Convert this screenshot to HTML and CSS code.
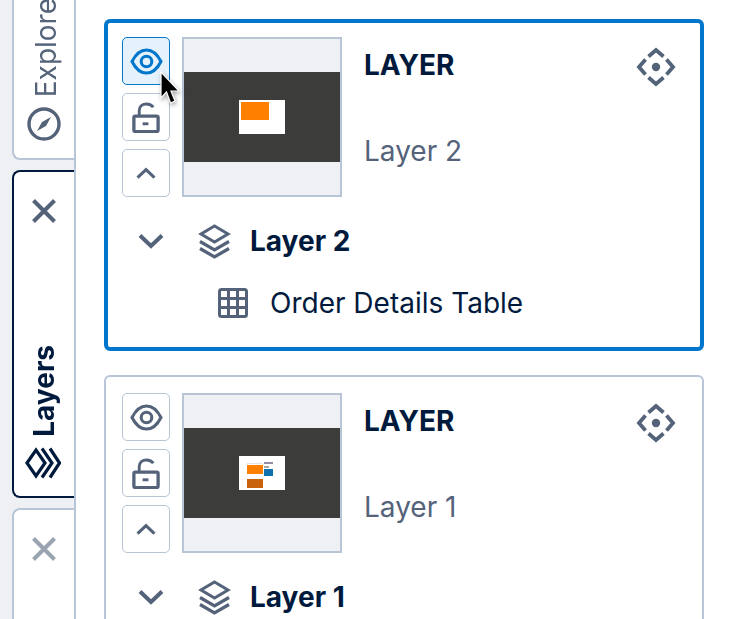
FILE: index.html
```html
<!DOCTYPE html>
<html lang="en">
<head>
    <meta charset="UTF-8">
    <title>Layers</title>
    <link rel="stylesheet" href="styles.css">
</head>
<body>
    <svg class="sprite" width="0" height="0">
        <symbol id="eye" viewBox="0 0 34 28">
            <path d="M2 14C6 6 11 2 17 2s11 4 15 12c-4 8-9 12-15 12S6 22 2 14Z" fill="none" stroke="currentColor" stroke-width="3.200"/>
            <circle cx="17" cy="14" r="5.500" fill="none" stroke="currentColor" stroke-width="3.200"/>
        </symbol>
        <symbol id="lock" viewBox="0 0 28 32">
            <path d="M7 14V9C7 4.500 10.500 2 14.500 2c3 0 5.500 1.200 7 3.500" fill="none" stroke="currentColor" stroke-width="3"/>
            <rect x="1.500" y="14.500" width="25" height="16" rx="1.500" fill="none" stroke="currentColor" stroke-width="3.400"/>
            <rect x="10.500" y="21" width="6" height="3" fill="currentColor"/>
        </symbol>
        <symbol id="chevron" viewBox="0 0 26 16">
            <path d="M2 2.500 13 13 24 2.500" fill="none" stroke="currentColor" stroke-width="4"/>
        </symbol>
        <symbol id="move" viewBox="0 0 40 40">
            <path d="M12.500 9.500 20 3l7.500 6.500M30.500 12.500 37 20l-6.500 7.500M12.500 30.500 20 37l7.500-6.500M9.500 12.500 3 20l6.500 7.500" fill="none" stroke="currentColor" stroke-width="3.800"/>
            <circle cx="20" cy="20" r="4.200" fill="currentColor"/>
        </symbol>
        <symbol id="stack" viewBox="0 0 33 35">
            <path d="M16.500 2 30 10 16.500 18 3 10Z" fill="none" stroke="currentColor" stroke-width="3"/>
            <path d="M2 17.500 16.500 26 31 17.500M2 24.500 16.500 33 31 24.500" fill="none" stroke="currentColor" stroke-width="3.200"/>
        </symbol>
        <symbol id="cross" viewBox="0 0 26 26">
            <path d="M2.500 2.500l21 21M23.500 2.500l-21 21" fill="none" stroke="currentColor" stroke-width="4"/>
        </symbol>
    </svg>

    <div class="app">
        <nav class="sidebar">
            <div class="tab tab-explore">
                <div class="tab-label">
                    <svg class="tab-icon" width="34" height="34" viewBox="0 0 34 34">
                        <circle cx="17" cy="17" r="15" fill="none" stroke="currentColor" stroke-width="3.400"/>
                        <path d="M24 10 19 19 10 24 15 15Z" fill="currentColor"/>
                    </svg>
                    <span class="tab-text">Explore</span>
                </div>
            </div>
            <div class="tab tab-active">
                <svg class="tab-close" width="26" height="26"><use href="#cross"/></svg>
                <div class="tab-label">
                    <svg class="tab-icon tab-logo" width="36" height="32" viewBox="0 0 36 32">
                        <path d="M2 16 11 3 20 16 11 29Z" fill="none" stroke="currentColor" stroke-width="3.200"/>
                        <path d="M17 1.500 27 16 17 30.500M25 1.500 34.500 16 25 30.500" fill="none" stroke="currentColor" stroke-width="3.200"/>
                    </svg>
                    <span class="tab-text">Layers</span>
                </div>
            </div>
            <div class="tab tab-muted">
                <svg class="tab-close" width="26" height="26"><use href="#cross"/></svg>
            </div>
        </nav>

        <main class="panel">
            <section class="card card-selected">
                <div class="card-top">
                    <div class="actions">
                        <button class="btn btn-on"><svg width="33" height="27"><use href="#eye"/></svg></button>
                        <button class="btn"><svg width="28" height="31"><use href="#lock"/></svg></button>
                        <button class="btn"><svg class="flip" width="20" height="13"><use href="#chevron"/></svg></button>
                    </div>
                    <div class="thumb">
                        <div class="thumb-band">
                            <div class="mini">
                                <div class="mini-orange"></div>
                            </div>
                        </div>
                    </div>
                    <div class="info">
                        <div class="info-title">LAYER</div>
                        <div class="info-name">Layer 2</div>
                    </div>
                    <svg class="move" width="40" height="40"><use href="#move"/></svg>
                </div>
                <div class="tree-row">
                    <svg class="tree-toggle" width="26" height="16"><use href="#chevron"/></svg>
                    <svg class="tree-icon" width="33" height="35"><use href="#stack"/></svg>
                    <span class="tree-name">Layer 2</span>
                </div>
                <div class="tree-child">
                    <svg class="child-icon" width="30" height="30" viewBox="0 0 30 30">
                        <rect x="1.500" y="1.500" width="27" height="27" rx="2" fill="none" stroke="currentColor" stroke-width="3"/>
                        <path d="M10.500 2v26M19.500 2v26M2 10.500h26M2 19.500h26" fill="none" stroke="currentColor" stroke-width="3"/>
                    </svg>
                    <span class="child-name">Order Details Table</span>
                </div>
            </section>

            <section class="card">
                <div class="card-top">
                    <div class="actions">
                        <button class="btn"><svg width="33" height="27"><use href="#eye"/></svg></button>
                        <button class="btn"><svg width="28" height="31"><use href="#lock"/></svg></button>
                        <button class="btn"><svg class="flip" width="20" height="13"><use href="#chevron"/></svg></button>
                    </div>
                    <div class="thumb">
                        <div class="thumb-band">
                            <div class="mini mini-split">
                                <div class="mini-col">
                                    <div class="bar-line"></div>
                                    <div class="bar-orange"></div>
                                    <div class="bar-brown"></div>
                                </div>
                                <div class="mini-col mini-col-side">
                                    <div class="bar-purple"></div>
                                    <div class="bar-grey"></div>
                                    <div class="bar-blue"></div>
                                </div>
                            </div>
                        </div>
                    </div>
                    <div class="info">
                        <div class="info-title">LAYER</div>
                        <div class="info-name">Layer 1</div>
                    </div>
                    <svg class="move" width="40" height="40"><use href="#move"/></svg>
                </div>
                <div class="tree-row">
                    <svg class="tree-toggle" width="26" height="16"><use href="#chevron"/></svg>
                    <svg class="tree-icon" width="33" height="35"><use href="#stack"/></svg>
                    <span class="tree-name">Layer 1</span>
                </div>
            </section>
        </main>
    </div>

    <svg class="cursor" width="24" height="36" viewBox="0 0 24 36">
        <path d="M2 1v26l5.500-6L11.500 32l4.500-2-4-10h8Z" fill="#000" stroke="#fff" stroke-width="1.200"/>
    </svg>
</body>
</html>
```

FILE: styles.css
```css
* { box-sizing: border-box; }
html, body { margin: 0; height: 100%; overflow: hidden; }
body { font-family: Inter, "Liberation Sans", sans-serif; color: #001a3d; background: #fff; }
.sprite { display: block; height: 0; }

.app { display: flex; height: 619px; overflow: hidden; }

.sidebar { width: 76px; flex-shrink: 0; height: 619px; padding-left: 12px; display: flex; flex-direction: column; gap: 10px; background: #eef0f4; border-right: 2px solid #b8c5d6; overflow: hidden; }
.tab { display: flex; flex-direction: column; align-items: center; flex-shrink: 0; background: #fff; border: 2px solid #b8c5d6; border-right: none; overflow: hidden; }
.tab-explore { height: 160px; border-top: none; border-radius: 0 0 0 8px; justify-content: flex-end; padding-bottom: 17px; color: #54637a; }
.tab-explore .tab-text { margin-left: 3px; }
.tab-active { height: 328px; margin-right: -2px; border-color: #001a3d; border-radius: 8px 0 0 8px; justify-content: space-between; padding: 26px 2px 17px 0; color: #001a3d; }
.tab-muted { height: 130px; border-radius: 8px 0 0 0; padding-top: 26px; color: #9aa3b0; }
.tab-active .tab-close { color: #54637a; }
.tab-label { display: flex; flex-direction: column-reverse; align-items: center; gap: 10px; }
.tab-icon { display: block; flex-shrink: 0; }
.tab-logo { margin-right: 3px; }
.tab-text { writing-mode: vertical-rl; transform: rotate(180deg); font-size: 28px; line-height: 30px; white-space: nowrap; }
.tab-active .tab-text { font-weight: 700; }

.panel { flex: 1; padding: 19px 26px 0 28px; display: flex; flex-direction: column; gap: 24px; }
.card { flex-shrink: 0; border: 2px solid #b8c5d6; border-radius: 6px; padding: 16px; background: #fff; }
.card-selected { height: 332px; border: 4px solid #0077cc; padding: 14px; }

.card-top { display: flex; align-items: flex-start; }
.actions { display: flex; flex-direction: column; gap: 8px; width: 48px; margin-right: 12px; }
.btn { width: 48px; height: 48px; padding: 0; display: flex; align-items: center; justify-content: center; background: #fff; color: #54637a; border: 1px solid #b8c5d6; border-radius: 5px; }
.btn-on { background: #e6f2fb; color: #0077cc; border-color: #0077cc; }
.flip { transform: rotate(180deg); }

.thumb { width: 160px; height: 160px; display: flex; align-items: center; background: #eef0f4; border: 2px solid #b8c5d6; }
.thumb-band { width: 100%; height: 90px; display: flex; align-items: center; justify-content: center; background: #3c3c3b; }
.mini { width: 46px; height: 34px; padding: 2px; background: #fff; }
.mini-orange { width: 28px; height: 18px; background: #ff8000; }
.mini-split { display: flex; gap: 1px; padding: 6px 0 0 8px; }
.mini-col { width: 16px; display: flex; flex-direction: column; }
.mini-col-side { width: 9px; }
.bar-line { height: 1px; margin-top: 1px; margin-bottom: 1px; background: #e4e4e8; }
.bar-orange { height: 9px; background: #ff8000; }
.bar-brown { height: 9px; margin-top: 5px; background: #c8620c; }
.bar-purple { height: 2px; background: #948ba6; }
.bar-grey { width: 5px; height: 2px; margin-top: 2px; background: #a8a8a8; }
.bar-blue { height: 7px; margin-top: 1px; background: #0f71ae; }

.info { flex: 1; padding: 12px 0 0 22px; }
.info-title { font-size: 28px; line-height: 32px; font-weight: 700; }
.info-name { margin-top: 54px; font-size: 28px; line-height: 32px; color: #54637a; }
.move { margin: 10px 10px 0 0; color: #54637a; }

.tree-row { display: flex; align-items: center; height: 36px; margin-top: 26px; padding-left: 16px; }
.tree-toggle { color: #54637a; }
.tree-icon { margin-left: 34px; color: #54637a; }
.tree-name { margin-left: 19px; font-size: 28px; font-weight: 700; }
.tree-child { display: flex; align-items: center; height: 32px; margin-top: 28px; padding-left: 96px; }
.child-icon { color: #54637a; }
.child-name { margin-left: 22px; font-size: 28px; }

.cursor { position: absolute; left: 159px; top: 71px; filter: drop-shadow(1px 2px 2px rgba(0, 0, 0, 0.35)); }
```
